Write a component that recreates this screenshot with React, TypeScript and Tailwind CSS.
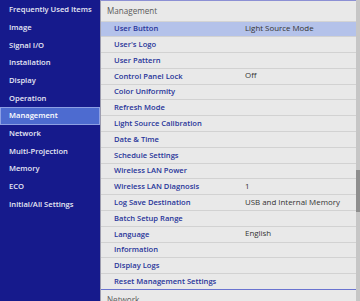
import React from "react";

const leftItems = [
  "Frequently Used Items",
  "Image",
  "Signal I/O",
  "Installation",
  "Display",
  "Operation",
  "Management",
  "Network",
  "Multi-Projection",
  "Memory",
  "ECO",
  "Initial/All Settings",
];

const rows: [string, string][] = [
  ["User Button", "Light Source Mode"],
  ["User's Logo", ""],
  ["User Pattern", ""],
  ["Control Panel Lock", "Off"],
  ["Color Uniformity", ""],
  ["Refresh Mode", ""],
  ["Light Source Calibration", ""],
  ["Date & Time", ""],
  ["Schedule Settings", ""],
  ["Wireless LAN Power", ""],
  ["Wireless LAN Diagnosis", "1"],
  ["Log Save Destination", "USB and Internal Memory"],
  ["Batch Setup Range", ""],
  ["Language", "English"],
  ["Information", ""],
  ["Display Logs", ""],
  ["Reset Management Settings", ""],
];

export default function App() {
  return (
    <div
      className="flex w-[360px] h-[301px] overflow-hidden bg-[#161a8c] text-[7.9px]"
      style={{ fontFamily: '"Open Sans", "Noto Sans", sans-serif' }}
    >
      <div className="w-[100px] shrink-0 pt-[1px] flex flex-col bg-[#161a8c]">
        {leftItems.map((t) => {
          const sel = t === "Management";
          return (
            <div
              key={t}
              className={
                sel
                  ? "h-[17.7px] flex items-center pl-[8px] bg-[#4d6bd0] border border-[#8da0e4] text-white font-semibold text-[7.6px]"
                  : "h-[17.7px] flex items-center pl-[9px] text-[#e6e8f4] font-semibold text-[7.6px]"
              }
            >
              {t}
            </div>
          );
        })}
      </div>
      <div className="flex-1 flex flex-col bg-[#e9e9e9] border-l border-[#9c9cae] border-t border-t-[#8c90d4] min-w-0">
        <div className="h-[20.5px] shrink-0 flex items-center pl-[6px] text-[#5a5a5a] text-[8.1px] border-b border-[#d4d4d4]">
          Management
        </div>
        {rows.map(([a, b], i) => (
          <div
            key={a}
            className={
              (i === 0 ? "bg-[#b4c2ea] " : "") +
              (i === rows.length - 1
                ? "border-b border-[#6a74d0] "
                : "border-b border-[#d2d2d2] ") +
              "h-[15.8px] shrink-0 flex items-center"
            }
          >
            <div className="w-[144px] shrink-0 pl-[13px] text-[#28359a] font-semibold text-[7.6px] whitespace-nowrap">
              {a}
            </div>
            <div className="text-[#333333] whitespace-nowrap">{b}</div>
          </div>
        ))}
        <div className="h-[20px] shrink-0 flex items-start pt-[4px] pl-[6px] text-[#5a5a5a] text-[8.1px]">
          Network
        </div>
      </div>
      <div className="w-[4px] shrink-0 flex flex-col bg-[#c6c6c6]">
        <div className="h-[170px]" />
        <div className="h-[42px] bg-[#8e8e8e]" />
      </div>
    </div>
  );
}
